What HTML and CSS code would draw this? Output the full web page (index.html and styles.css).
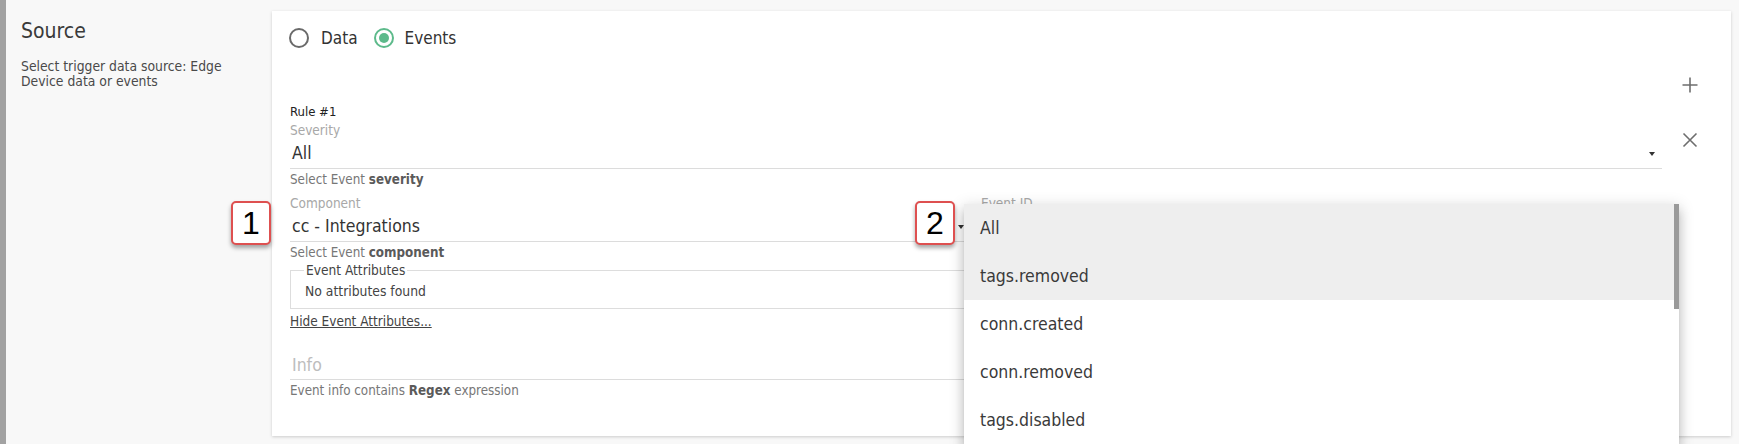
FILE: index.html
```html
<!DOCTYPE html>
<html lang="en">
<head>
<meta charset="utf-8">
<title>Source</title>
<link rel="stylesheet" href="styles.css">
</head>
<body>
<div class="page">
  <aside class="side">
    <h2 class="side-title">Source</h2>
    <p class="side-desc">Select trigger data source: Edge Device data or events</p>
  </aside>
  <section class="card">
    <div class="card-main">
      <div class="radios">
        <label class="radio"><span class="radio-dot"></span>Data</label>
        <label class="radio is-checked"><span class="radio-dot"></span>Events</label>
      </div>
      <div class="rule-title">Rule #1</div>
      <div class="field">
        <div class="field-label">Severity</div>
        <div class="field-input"><span>All</span><span class="caret"></span></div>
      </div>
      <div class="hint">Select Event <b>severity</b></div>
      <div class="two-col">
        <div>
          <div class="field field-tight">
            <div class="field-label">Component</div>
            <div class="field-input"><span>cc - Integrations</span><span class="caret"></span></div>
          </div>
          <div class="hint">Select Event <b>component</b></div>
        </div>
        <div>
          <div class="field field-tight">
            <div class="field-label">Event ID</div>
            <div class="field-input"><span>All</span><span class="caret"></span></div>
          </div>
          <div class="hint">Select Event <b>ID</b></div>
        </div>
      </div>
      <fieldset class="attrs">
        <legend>Event Attributes</legend>
        <div class="attrs-empty">No attributes found</div>
      </fieldset>
      <a class="toggle" href="#">Hide Event Attributes...</a>
      <div class="field field-info">
        <div class="field-input placeholder"><span>Info</span></div>
      </div>
      <div class="hint">Event info contains <b>Regex</b> expression</div>
    </div>
    <div class="card-actions">
      <button class="icon-btn icon-add" type="button" aria-label="Add rule">
        <svg width="18" height="18" viewBox="0 0 18 18"><path d="M9 1.5V16.5M1.5 9H16.5" stroke="#6e6e6e" stroke-width="1.6" fill="none"/></svg>
      </button>
      <button class="icon-btn icon-remove" type="button" aria-label="Remove rule">
        <svg width="16" height="16" viewBox="0 0 16 16"><path d="M1.5 1.5L14.5 14.5M14.5 1.5L1.5 14.5" stroke="#6e6e6e" stroke-width="1.6" fill="none"/></svg>
      </button>
    </div>
  </section>
</div>

<div class="menu">
  <ul class="menu-list">
    <li class="menu-item is-active">All</li>
    <li class="menu-item is-active">tags.removed</li>
    <li class="menu-item">conn.created</li>
    <li class="menu-item">conn.removed</li>
    <li class="menu-item">tags.disabled</li>
  </ul>
  <div class="menu-scroll"><div class="menu-thumb"></div></div>
</div>

<div class="callout callout-1">1</div>
<div class="callout callout-2">2</div>
</body>
</html>
```

FILE: styles.css
```css
html, body {
  margin: 0;
  padding: 0;
  height: 100%;
  overflow: hidden;
}

body {
  background: #f8f8f8;
  font-family: "DejaVu Sans Condensed", "DejaVu Sans", sans-serif;
  color: #333;
  position: relative;
}

.page {
  display: flex;
  align-items: flex-start;
  min-height: 100%;
}

.side {
  box-sizing: border-box;
  width: 272px;
  min-height: 444px;
  border-left: 6px solid #a2a2a2;
  padding: 19px 0 0 15px;
  flex-shrink: 0;
}

.side-title {
  margin: 0;
  font-size: 21px;
  line-height: 24px;
  font-weight: normal;
  color: #3a3a3a;
}

.side-desc {
  margin: 16px 0 0;
  width: 215px;
  font-size: 13.8px;
  line-height: 14.5px;
  color: #4a4a4a;
}

.card {
  margin-top: 11px;
  width: 1459px;
  background: #fff;
  box-shadow: 0 1px 3px rgba(0, 0, 0, 0.18);
  display: flex;
  flex-shrink: 0;
}

.card-main {
  flex: 1;
  padding: 17px 0 37px 18px;
  min-width: 0;
}

.card-actions {
  width: 69px;
  flex-shrink: 0;
  display: flex;
  flex-direction: column;
  align-items: flex-start;
  padding-top: 62px;
}

.icon-btn {
  width: 24px;
  height: 24px;
  padding: 0;
  border: 0;
  background: transparent;
  display: flex;
  align-items: center;
  justify-content: center;
  margin-left: 16px;
}

.icon-remove {
  margin-top: 31px;
}

.radios {
  display: flex;
  align-items: center;
  height: 20px;
}

.radio {
  display: flex;
  align-items: center;
  font-size: 17px;
  line-height: 20px;
  color: #333;
  margin-right: 17px;
}

.radio-dot {
  box-sizing: border-box;
  width: 20px;
  height: 20px;
  border: 2px solid #6a6a6a;
  border-radius: 50%;
  margin: 0 12px 0 -1px;
  display: flex;
  align-items: center;
  justify-content: center;
}

.radio.is-checked .radio-dot {
  border-color: #5dba8b;
  margin-right: 11px;
}

.radio.is-checked .radio-dot::after {
  content: "";
  width: 10px;
  height: 10px;
  border-radius: 50%;
  background: #5dba8b;
}

.rule-title {
  margin-top: 56px;
  font-size: 13px;
  line-height: 16px;
  color: #222;
}

.field {
  margin-top: 3px;
}

.field-tight {
  margin-top: 0;
}

.field-label {
  font-size: 13.5px;
  line-height: 15px;
  color: #a8a8a8;
}

.field-input {
  display: flex;
  align-items: center;
  justify-content: space-between;
  height: 30px;
  font-size: 17.5px;
  color: #333;
  border-bottom: 1px solid #dcdcdc;
  padding-left: 2px;
}

.caret {
  width: 0;
  height: 0;
  border-left: 3px solid transparent;
  border-right: 3px solid transparent;
  border-top: 4px solid #333;
  margin-right: 7px;
  margin-top: 2px;
}

.hint {
  margin-top: 3px;
  font-size: 13.3px;
  line-height: 16px;
  color: #777;
}

.hint b {
  color: #5a5a5a;
  font-weight: bold;
}

.two-col {
  margin-top: 8px;
  display: grid;
  grid-template-columns: 1fr 1fr;
  column-gap: 10px;
}

.attrs {
  margin: 1px 0 0;
  padding: 5px 12px 9px 14px;
  border: 1px solid #dddddd;
  min-width: 0;
}

.attrs legend {
  padding: 0 2px;
  margin-left: -1px;
  font-size: 13.6px;
  line-height: 16px;
  color: #444;
}

.attrs-empty {
  font-size: 13.8px;
  line-height: 16px;
  color: #444;
}

.toggle {
  display: inline-block;
  margin-top: 4px;
  font-size: 13.5px;
  line-height: 16px;
  color: #444;
  text-decoration: underline;
}

.field-info {
  margin-top: 21px;
}

.field-info .field-input {
  height: 28px;
}

.placeholder {
  color: #bdbdbd;
}

.menu {
  position: absolute;
  left: 964px;
  top: 204px;
  width: 715px;
  height: 240px;
  background: #fff;
  display: flex;
  box-shadow: 0 5px 5px -3px rgba(0, 0, 0, 0.2), 0 8px 10px 1px rgba(0, 0, 0, 0.14), 0 3px 14px 2px rgba(0, 0, 0, 0.12);
}

.menu-list {
  list-style: none;
  margin: 0;
  padding: 0;
  flex: 1;
}

.menu-item {
  height: 48px;
  line-height: 48px;
  padding-left: 16px;
  font-size: 17.5px;
  color: #3a3a3a;
}

.menu-item.is-active {
  background: #eeeeee;
}

.menu-scroll {
  width: 5px;
  flex-shrink: 0;
}

.menu-thumb {
  height: 105px;
  background: #9a9a9a;
}

.callout {
  position: absolute;
  top: 201px;
  box-sizing: border-box;
  width: 40px;
  height: 44px;
  background: #fff;
  border: 2px solid #de5050;
  border-radius: 5px;
  box-shadow: 0 3px 4px rgba(0, 0, 0, 0.35);
  display: flex;
  align-items: center;
  justify-content: center;
  font-family: "Liberation Sans", Arial, sans-serif;
  font-size: 32px;
  line-height: 1;
  color: #000;
}

.callout-1 {
  left: 231px;
}

.callout-2 {
  left: 915px;
}
```
